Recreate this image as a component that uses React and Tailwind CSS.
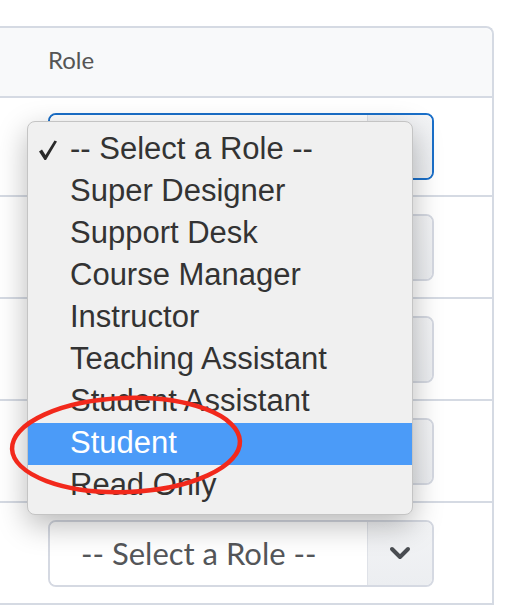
import React from "react";

function Chevron() {
  return (
    <svg width="22" height="14" viewBox="0 0 22 14" fill="none">
      <path d="M3 3l8 8 8-8" stroke="#4a4d52" strokeWidth="4" strokeLinecap="round" strokeLinejoin="round" />
    </svg>
  );
}

function Check() {
  return (
    <svg width="20" height="22" viewBox="0 0 20 22">
      <path d="M1 12.5 L4 10.5 L7.5 16 L16.5 1.5 L19 2.5 L8 21 L6.5 21 Z" fill="#2a2a2a" />
    </svg>
  );
}

function SelectBox({ focused }) {
  return (
    <div
      className={
        "flex h-[67px] w-[386px] rounded-[8px] border-2 overflow-hidden " +
        (focused ? "border-[#1a6fc9]" : "border-[#d5d9e2]")
      }
    >
      <div className="flex flex-1 items-center bg-white pl-[31px] font-[Lato,sans-serif] text-[31px] text-[#545659]">
        -- Select a Role --
      </div>
      <div className="flex w-[65px] items-center justify-center border-l border-[#dfe2e8] bg-gradient-to-b from-[#f3f4f6] to-[#eceef1]">
        <Chevron />
      </div>
    </div>
  );
}

const roles = [
  "-- Select a Role --",
  "Super Designer",
  "Support Desk",
  "Course Manager",
  "Instructor",
  "Teaching Assistant",
  "Student Assistant",
  "Student",
  "Read Only",
];

export default function App() {
  return (
    <div className="relative h-[606px] w-[515px] overflow-hidden bg-white">
      <div className="pt-[26px]">
        <div className="w-[494px] rounded-tr-[8px] border-t-2 border-r-2 border-[#d5dae3]">
          <div className="flex h-[70px] items-center rounded-tr-[8px] border-b-2 border-[#d5dae3] bg-[#f8f9fa] pb-[4px] pl-[48px] font-[Lato,sans-serif] text-[24px] text-[#555]">
            Role
          </div>
          {[0, 1, 2, 3, 4].map((i) => (
            <div
              key={i}
              className={
                "flex items-center border-b-2 border-[#d5dae3] pl-[48px] " +
                (i === 0 ? "h-[99px]" : "h-[102px]")
              }
            >
              <SelectBox focused={i === 0} />
            </div>
          ))}
        </div>
      </div>

      {/* native dropdown menu overlay */}
      <div className="absolute left-[27px] top-[121px] w-[386px] rounded-[8px] border border-[#c4c4c4] bg-[#f0f0f0] py-[7px] shadow-[0_10px_30px_rgba(0,0,0,0.28)] font-['Liberation_Sans',Arial,sans-serif] text-[31px] text-[#333]">
        {roles.map((r, i) => (
          <div
            key={r}
            className={
              "relative flex h-[42px] items-center pl-[42px] leading-none " +
              (r === "Student" ? "bg-[#4b9bf8] text-white" : "")
            }
          >
            {i === 0 && (
              <span className="absolute left-[10px] top-[10px]">
                <Check />
              </span>
            )}
            <span className="-mt-[3px]">{r}</span>
          </div>
        ))}
      </div>

      {/* red annotation ellipse */}
      <svg className="pointer-events-none absolute left-0 top-0" width="515" height="606">
        <ellipse cx="126" cy="445" rx="114" ry="47" fill="none" stroke="#f2291c" strokeWidth="4.5" transform="rotate(-2 126 445)" />
      </svg>
    </div>
  );
}
